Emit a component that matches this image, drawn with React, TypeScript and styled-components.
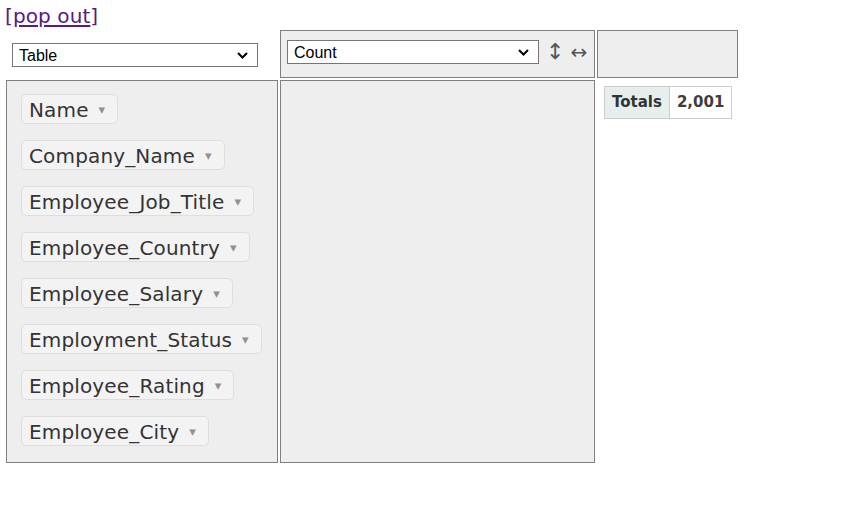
import React from "react";
import styled, { createGlobalStyle } from "styled-components";

const GlobalStyle = createGlobalStyle`
  html, body { margin: 0; padding: 0; background: #fff; }
  body { font-family: "DejaVu Sans", Verdana, sans-serif; color: #333; }
`;

const Page = styled.div`
  padding: 5px 0 0 5px;
`;

const PopOut = styled.a`
  display: inline-block;
  font-family: "DejaVu Sans", Verdana, sans-serif;
  font-size: 20px;
  letter-spacing: 0.1px;
  line-height: 22px;
  color: #551a8b;
  text-decoration: none;
  span { text-decoration: underline; text-underline-offset: 2px; }
`;

const PivotGrid = styled.div`
  display: grid;
  grid-template-columns: 272px 315px 141px;
  grid-template-rows: 48px 383px;
  gap: 2px;
  margin: 3px 0 0 1px;
`;

const RendererCell = styled.div`
  display: flex;
  align-items: center;
  padding: 2px 0 0 6px;
`;

const Box = styled.div`
  box-sizing: border-box;
  border: 1px solid #808080;
  background: #eeeeee;
`;

const ValsCell = styled(Box)`
  display: flex;
  align-items: flex-start;
  padding: 9px 6px 5px 6px;
`;

const SelectWrap = styled.div<{ $w: number }>`
  position: relative;
  width: ${(p) => p.$w}px;
  height: 24px;
  flex: none;
`;

const NativeSelect = styled.select`
  appearance: none;
  -webkit-appearance: none;
  box-sizing: border-box;
  width: 100%;
  height: 100%;
  margin: 0;
  border: 1px solid #767676;
  border-radius: 0;
  background: #fff;
  color: #000;
  font-family: "Liberation Sans", Arial, sans-serif;
  font-size: 16px;
  padding: 0 24px 0 6px;
  outline: none;
`;

const Chevron = styled.svg`
  position: absolute;
  right: 10px;
  top: 9px;
  pointer-events: none;
`;

const OrderArrow = styled.span<{ $ml: number; $size: number }>`
  margin-left: ${(p) => p.$ml}px;
  font-family: "DejaVu Sans", sans-serif;
  font-size: ${(p) => p.$size}px;
  line-height: 24px;
  color: #555;
  cursor: pointer;
  user-select: none;
`;

const UnusedCell = styled(Box)`
  display: flex;
  flex-direction: column;
  align-items: flex-start;
  gap: 16px;
  margin: 0;
  padding: 13px 14px;
  list-style: none;
`;

const AttrItem = styled.li`
  display: block;
`;

const Attr = styled.span`
  display: inline-flex;
  align-items: center;
  height: 30px;
  box-sizing: border-box;
  padding: 3px 12px 1px 7px;
  background: #f3f3f3;
  border: 1px solid #dedede;
  border-radius: 5px;
  font-family: "DejaVu Sans", Verdana, sans-serif;
  font-size: 20px;
  letter-spacing: 0.15px;
  line-height: 24px;
  color: #333;
  white-space: nowrap;
`;

const Triangle = styled.span`
  margin-left: 10px;
  font-size: 13px;
  color: #909090;
  cursor: pointer;
`;

const OutputCell = styled.div`
  padding: 6px 0 0 7px;
`;

const TotalsTable = styled.table`
  border-collapse: collapse;
  font-family: "DejaVu Sans", Verdana, sans-serif;
  font-size: 15px;
  line-height: 17px;
  font-weight: bold;
  color: #333;
`;

const TotalLabel = styled.th`
  background: #e6eeee;
  border: 1px solid #cdcdcd;
  padding: 7px;
  text-align: right;
`;

const TotalValue = styled.td`
  background: #fff;
  border: 1px solid #cdcdcd;
  padding: 7px;
  text-align: right;
  color: #3d3d3d;
`;

const attrs = [
  "Name",
  "Company_Name",
  "Employee_Job_Title",
  "Employee_Country",
  "Employee_Salary",
  "Employment_Status",
  "Employee_Rating",
  "Employee_City",
];

const ChevronIcon = () => (
  <Chevron width="11" height="7" viewBox="0 0 11 7">
    <path d="M1 1 L5.5 5.5 L10 1" fill="none" stroke="#000" strokeWidth="2" />
  </Chevron>
);

export default function App() {
  return (
    <>
      <GlobalStyle />
      <Page>
        <PopOut href="#">
          [<span>pop out</span>]
        </PopOut>
        <PivotGrid>
          <RendererCell>
            <SelectWrap $w={246}>
              <NativeSelect defaultValue="Table">
                <option>Table</option>
                <option>Table Heatmap</option>
                <option>Bar Chart</option>
              </NativeSelect>
              <ChevronIcon />
            </SelectWrap>
          </RendererCell>
          <ValsCell>
            <SelectWrap $w={252}>
              <NativeSelect defaultValue="Count">
                <option>Count</option>
                <option>Sum</option>
                <option>Average</option>
              </NativeSelect>
              <ChevronIcon />
            </SelectWrap>
            <OrderArrow $ml={7} $size={22}>↕</OrderArrow>
            <OrderArrow $ml={6} $size={20}>↔</OrderArrow>
          </ValsCell>
          <Box />
          <UnusedCell as="ul">
            {attrs.map((a) => (
              <AttrItem key={a}>
                <Attr>
                  {a}
                  <Triangle>▾</Triangle>
                </Attr>
              </AttrItem>
            ))}
          </UnusedCell>
          <Box />
          <OutputCell>
            <TotalsTable>
              <tbody>
                <tr>
                  <TotalLabel>Totals</TotalLabel>
                  <TotalValue>2,001</TotalValue>
                </tr>
              </tbody>
            </TotalsTable>
          </OutputCell>
        </PivotGrid>
      </Page>
    </>
  );
}
